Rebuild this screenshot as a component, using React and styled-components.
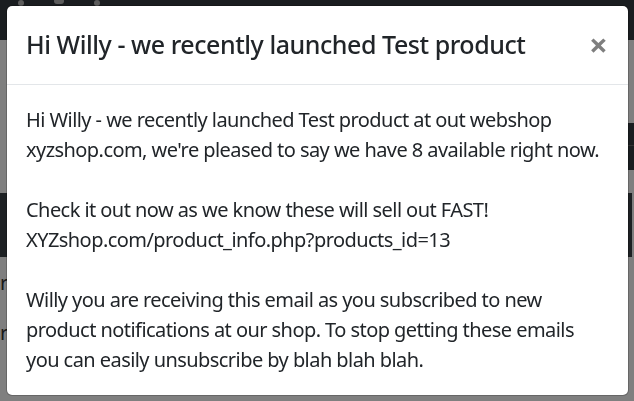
import React from "react";
import styled, { createGlobalStyle } from "styled-components";

const GlobalStyle = createGlobalStyle`
  html, body { margin: 0; padding: 0; }
  body {
    width: 634px;
    height: 401px;
    overflow: hidden;
    background: #fff;
    font-family: "Noto Sans", "Open Sans", Arial, sans-serif;
    color: #212529;
  }
`;

const Page = styled.div`
  display: flex;
  flex-direction: column;
  height: 401px;
`;

const Navbar = styled.header`
  height: 40px;
  background: #353a40;
  display: flex;
  align-items: flex-start;
  gap: 30px;
  padding: 0 0 0 18px;
`;

const NavGlyph = styled.span`
  display: block;
  width: ${(p) => p.$w}px;
  height: 6px;
  margin-top: ${(p) => p.$top}px;
  border-radius: 3px;
  background: #b8b8b8;
`;

const Content = styled.main`
  display: flex;
  flex-direction: column;
`;

const ToolbarRow = styled.div`
  display: flex;
  justify-content: flex-end;
  margin-top: 83px;
  height: 47px;
`;

const DarkButton = styled.div`
  width: 120px;
  height: 47px;
  background: #343a40;
  box-shadow: inset 0 22px 0 #343a40, inset 0 23px 0 #666;
`;

const TableHead = styled.div`
  height: 64px;
  margin-top: 23px;
  margin-right: 2px;
  background: #3b4046;
`;

const TableRow = styled.div`
  height: 50px;
  display: flex;
  align-items: center;
  font-size: 20px;
  color: #333;
`;

const Backdrop = styled.div`
  position: fixed;
  inset: 0;
  background: rgba(0, 0, 0, 0.5);
`;

const Modal = styled.div`
  position: fixed;
  top: 5px;
  left: 6px;
  width: 623px;
  box-sizing: border-box;
  background: #fff;
  border: 1px solid rgba(0, 0, 0, 0.2);
  border-radius: 6px;
  display: flex;
  flex-direction: column;
  background-clip: padding-box;
`;

const ModalHeader = styled.div`
  display: flex;
  align-items: flex-start;
  justify-content: space-between;
  padding: 20px 20px 20px 19px;
  border-bottom: 1px solid #e3e6e9;
`;

const ModalTitle = styled.h5`
  margin: 0;
  font-size: 25px;
  line-height: 1.5;
  font-weight: 500;
  letter-spacing: -0.45px;
  color: #212529;
`;

const CloseButton = styled.button`
  padding: 22px 20px 18px 22px;
  margin: -20px -20px -20px auto;
  background: transparent;
  border: 0;
  font-family: inherit;
  font-size: 33px;
  font-weight: 700;
  line-height: 1;
  color: #000;
  opacity: 0.5;
  text-shadow: 0 1px 0 #fff;
  cursor: pointer;
`;

const ModalBody = styled.div`
  padding: 20px 20px 20px 19px;
  font-size: 20px;
  line-height: 1.5;
  letter-spacing: -0.56px;
  color: #212529;
`;

export default function App() {
  return (
    <>
      <GlobalStyle />
      <Page>
        <Navbar>
          <NavGlyph $w={6} $top={0} />
          <NavGlyph $w={10} $top={-2} />
          <NavGlyph $w={6} $top={0} />
        </Navbar>
        <Content>
          <ToolbarRow>
            <DarkButton />
          </ToolbarRow>
          <TableHead />
          <TableRow>ri</TableRow>
          <TableRow>ri</TableRow>
        </Content>
      </Page>
      <Backdrop />
      <Modal role="dialog">
        <ModalHeader>
          <ModalTitle>Hi Willy - we recently launched Test product</ModalTitle>
          <CloseButton aria-label="Close">×</CloseButton>
        </ModalHeader>
        <ModalBody>
          Hi Willy - we recently launched Test product at out webshop xyzshop.com, we're pleased to say we have 8 available right now.
          <br />
          <br />
          Check it out now as we know these will sell out FAST!
          <br />
          XYZshop.com/product_info.php?products_id=13
          <br />
          <br />
          Willy you are receiving this email as you subscribed to new product notifications at our shop. To stop getting these emails you can easily unsubscribe by blah blah blah.
        </ModalBody>
      </Modal>
    </>
  );
}
